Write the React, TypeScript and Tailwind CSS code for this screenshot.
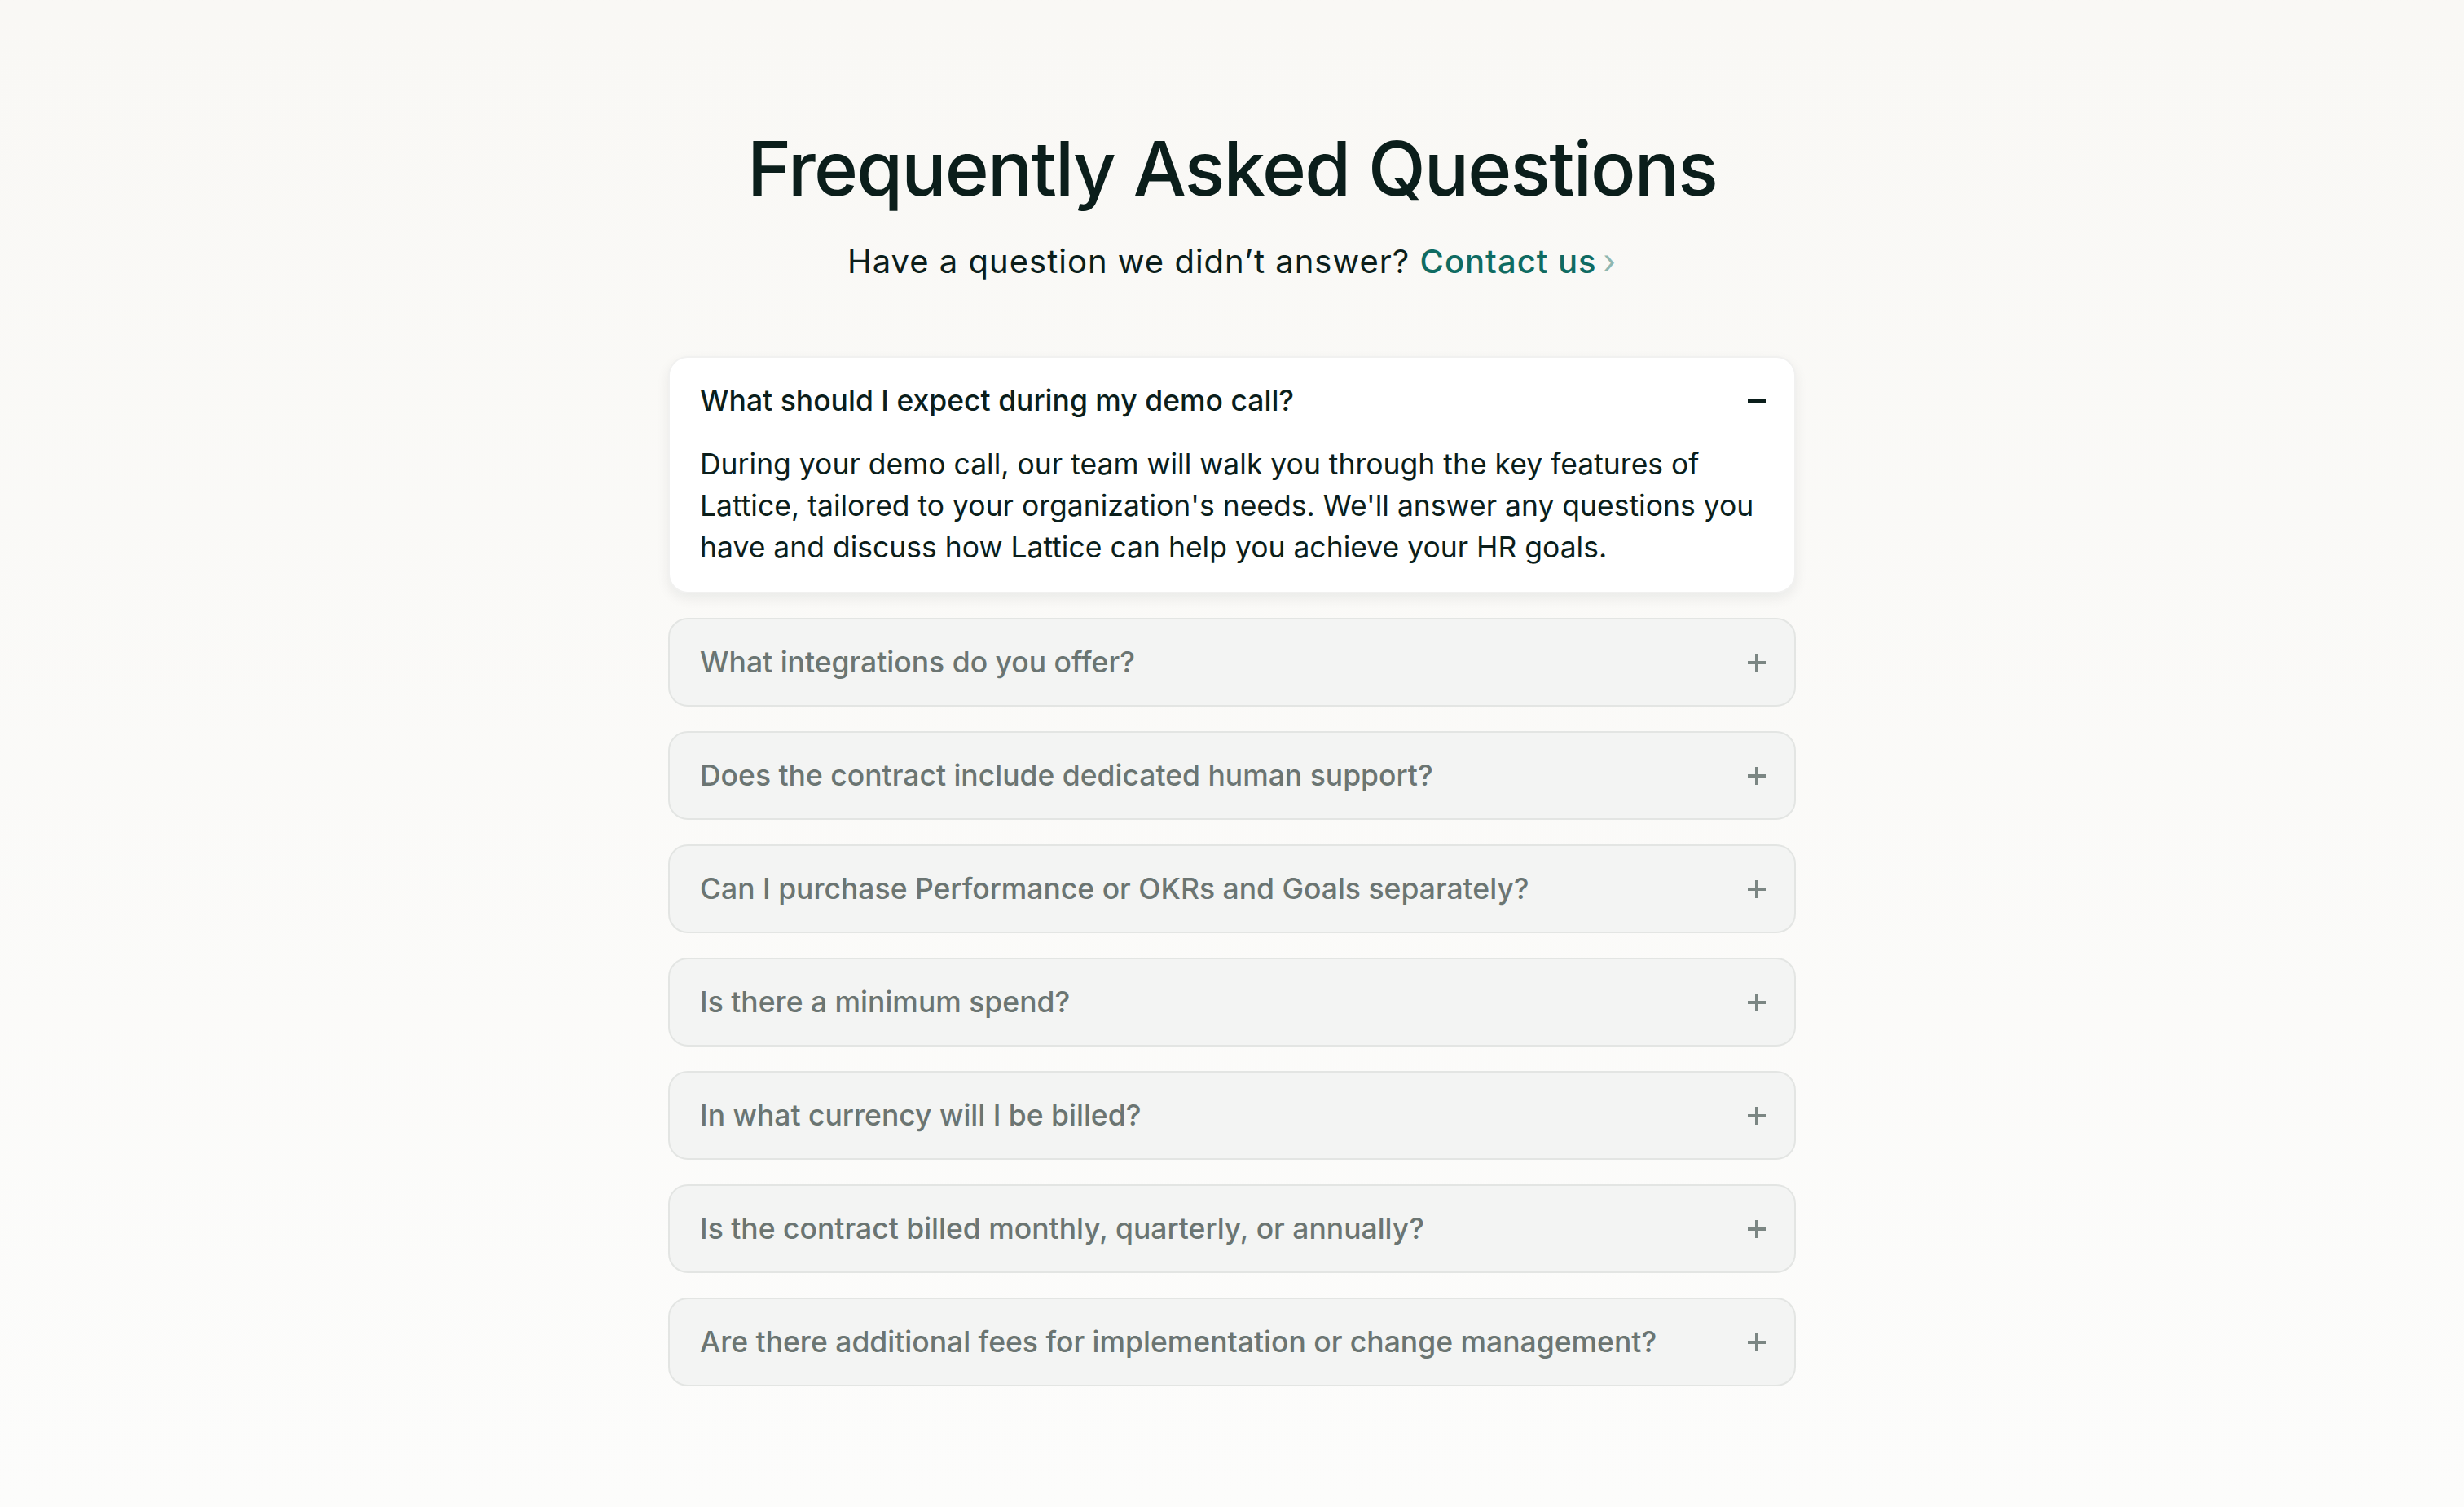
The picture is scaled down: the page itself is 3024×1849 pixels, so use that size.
import { useState } from "react"

type Faq = {
  q: string
  a: string
}

const FAQS: Faq[] = [
  {
    q: "What should I expect during my demo call?",
    a: "During your demo call, our team will walk you through the key features of Lattice, tailored to your organization's needs. We'll answer any questions you have and discuss how Lattice can help you achieve your HR goals.",
  },
  { q: "What integrations do you offer?", a: "" },
  { q: "Does the contract include dedicated human support?", a: "" },
  { q: "Can I purchase Performance or OKRs and Goals separately?", a: "" },
  { q: "Is there a minimum spend?", a: "" },
  { q: "In what currency will I be billed?", a: "" },
  { q: "Is the contract billed monthly, quarterly, or annually?", a: "" },
  { q: "Are there additional fees for implementation or change management?", a: "" },
]

function ToggleIcon({ open }: { open: boolean }) {
  return (
    <svg width="22" height="22" viewBox="0 0 22 22" className={open ? "text-[#0b1e1b]" : "text-[#7b8683]"}>
      <rect x="0" y="9" width="22" height="4" fill="currentColor" />
      {!open && <rect x="9" y="0" width="4" height="22" fill="currentColor" />}
    </svg>
  )
}

export default function App() {
  const [openIdx, setOpenIdx] = useState<number | null>(0)

  return (
    <div
      className="min-h-screen w-full bg-gradient-to-b from-[#f9f8f5] to-[#fcfcfb] text-[#0b1e1b]"
      style={{ fontFamily: "Inter, 'Noto Sans', sans-serif" }}
    >
      <main className="flex flex-col items-center pt-[152px] pb-[160px]">
        <h1 className="text-[92px] leading-[110px] font-medium tracking-[-0.02em] text-[#0b1e1b]">
          Frequently Asked Questions
        </h1>
        <p className="mt-[35px] text-[40px] leading-[48px] tracking-[0.025em] text-[#0b1e1b]">
          Have a question we didn’t answer?{" "}
          <a href="#" className="font-medium text-[#0f6b62]">
            Contact us
          </a>
          <span className="ml-[8px] text-[#8fb7b1]">›</span>
        </p>

        <div className="mt-[92px] flex w-[1384px] flex-col gap-[30px]">
          {FAQS.map((item, i) => {
            const open = openIdx === i
            return (
              <div
                key={item.q}
                className={`rounded-[24px] border-2 ${
                  open
                    ? "border-[#f1f1f0] bg-white shadow-[0_6px_16px_rgba(20,30,28,0.07)]"
                    : "border-[#e3e5e3] bg-[#f3f4f3]"
                }`}
              >
                <button
                  onClick={() => setOpenIdx(open ? null : i)}
                  className="flex h-[105px] w-full items-center justify-between pl-[37px] pr-[35px] text-left"
                >
                  <span
                    className={`text-[35.5px] leading-[51px] font-medium ${
                      open ? "text-[#0b1e1b]" : "text-[#6b7572]"
                    }`}
                  >
                    {item.q}
                  </span>
                  <ToggleIcon open={open} />
                </button>
                {open && item.a && (
                  <p className="pl-[37px] pr-[40px] pb-[29px] text-[35.5px] leading-[51px] text-[#0b1e1b]">
                    {item.a}
                  </p>
                )}
              </div>
            )
          })}
        </div>
      </main>
    </div>
  )
}
